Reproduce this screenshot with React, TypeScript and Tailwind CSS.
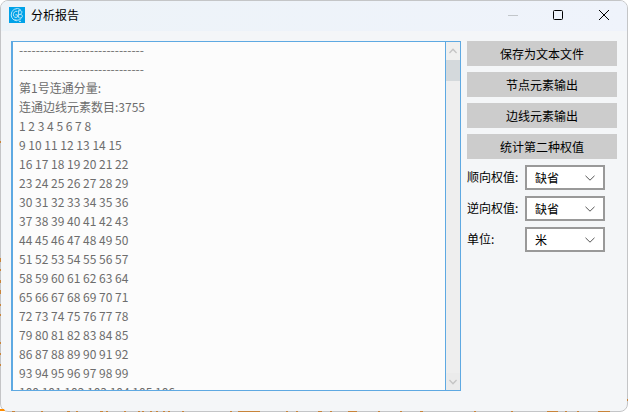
import { useLayoutEffect, useRef, useState } from "react";

const report = [
  "------------------------------",
  "------------------------------",
  "第1号连通分量:",
  "连通边线元素数目:3755",
  "1 2 3 4 5 6 7 8",
  "9 10 11 12 13 14 15",
  "16 17 18 19 20 21 22",
  "23 24 25 26 27 28 29",
  "30 31 32 33 34 35 36",
  "37 38 39 40 41 42 43",
  "44 45 46 47 48 49 50",
  "51 52 53 54 55 56 57",
  "58 59 60 61 62 63 64",
  "65 66 67 68 69 70 71",
  "72 73 74 75 76 77 78",
  "79 80 81 82 83 84 85",
  "86 87 88 89 90 91 92",
  "93 94 95 96 97 98 99",
  "100 101 102 103 104 105 106",
].join("\n");

const actions = ["保存为文本文件", "节点元素输出", "边线元素输出", "统计第二种权值"];

const settings = [
  { id: "forward", label: "顺向权值:", options: ["缺省"] },
  { id: "backward", label: "逆向权值:", options: ["缺省"] },
  { id: "unit", label: "单位:", options: ["米", "千米"] },
];

function AppIcon() {
  return (
    <svg className="size-4" viewBox="0 0 16 16" fill="none" aria-hidden="true">
      <rect width="16" height="16" fill="#00a2e8" />
      <g stroke="#b9e6f9" strokeWidth="1">
        <path d="M11.6 2.6A6 6 0 0 0 2.2 8c0 3 2.4 5.6 5.6 5.8" />
        <path d="M8.4 4.4C6 3.6 4.4 5.6 4.4 7.8s2.2 3.4 4 2.2V7.8H6.4" />
        <path d="M9.6 3.2v7.4c1.4 1 3.8.4 3.8-1.4s-1.8-2-3.6-1.6M9.6 4c2-1 3.8 0 3.2 1.8-.3 1-1.4 1.6-3 1.8" />
        <path d="M5.4 12.6c2 1 5 .8 6.8-1M10 14.4h2" />
      </g>
    </svg>
  );
}

function Chevron({ className = "" }: { className?: string }) {
  return (
    <svg className={className} width="10" height="6" viewBox="0 0 10 6" fill="none" stroke="currentColor" aria-hidden="true">
      <path d="M.5.8 5 5.2 9.5.8" />
    </svg>
  );
}

function ScrollArrow({ up = false }: { up?: boolean }) {
  return (
    <svg width="8" height="6" viewBox="0 0 8 6" fill="none" stroke="currentColor" strokeWidth="1.4" aria-hidden="true">
      <path d={up ? "M.4 5 4 1.2 7.6 5" : "M.4 1 4 4.8 7.6 1"} />
    </svg>
  );
}

function TitleBar() {
  return (
    <header className="flex h-[30px] items-center bg-linear-to-r from-[#edf3f8] to-[#eff3fb] pb-0.5 pl-2">
      <AppIcon />
      <h1 className="ml-1.5 grow text-[12px] leading-4 text-black">分析报告</h1>
      <button aria-label="最小化" className="flex h-full w-11 items-center justify-center text-[#c2c6ca]">
        <svg width="10" height="10" viewBox="0 0 10 10" stroke="currentColor"><path d="M0 5.5h10" /></svg>
      </button>
      <button aria-label="最大化" className="flex h-full w-[46px] items-center justify-center text-black">
        <svg width="10" height="10" viewBox="0 0 10 10" fill="none" stroke="currentColor"><rect x=".5" y=".5" width="9" height="9" rx="1" /></svg>
      </button>
      <button aria-label="关闭" className="flex h-full w-[46px] items-center justify-center text-black">
        <svg width="10" height="10" viewBox="0 0 10 10" stroke="currentColor"><path d="M0 0l10 10M10 0L0 10" /></svg>
      </button>
    </header>
  );
}

/* Edges of the drawing underneath, seen along the window's border: [start, length]. */
const bottomMarks = [
  [12, 3], [41, 2], [67, 3], [76, 2], [100, 3], [106, 2], [124, 2], [138, 2], [142, 2], [150, 2], [156, 2], [163, 2],
  [168, 2], [182, 2], [230, 2], [238, 22], [286, 2], [296, 2], [318, 4], [330, 2], [348, 9], [378, 2], [400, 2],
  [420, 3], [474, 2], [511, 2], [547, 11], [565, 2], [577, 2], [598, 12],
];
const leftMarks = [[141, 2], [258, 4], [269, 2], [280, 3], [290, 4], [304, 2], [314, 2], [342, 2], [353, 2], [364, 2]];

function CanvasMarks() {
  return (
    <svg className="pointer-events-none absolute inset-0 size-full" viewBox="0 0 628 412" fill="#c8843a" aria-hidden="true">
      {bottomMarks.map(([x, w]) => <rect key={x} x={x} y="411" width={w} height="1" />)}
      {leftMarks.map(([y, h]) => <rect key={y} x="0" y={y} width="1" height={h} />)}
      <rect x="627" y="399" width="1" height="2" />
      <path d="M0 409h4l1 2H0z" fill="#ff8c00" />
    </svg>
  );
}

export default function App() {
  const [text, setText] = useState(report);
  const box = useRef<HTMLTextAreaElement>(null);
  useLayoutEffect(() => {
    if (box.current) box.current.scrollTop = 2;
  }, []);
  return (
    <div className="relative flex h-screen font-['Noto_Sans_CJK_SC',sans-serif] text-[12px]">
      <div className="flex grow flex-col overflow-hidden rounded-lg border border-[#c4c5c7] bg-[#f4f6f8]">
        <TitleBar />
        <main className="flex min-h-0 grow gap-1.5 px-2.5 pt-2.5 pb-5">
          <div className="flex grow border border-l-2 border-[#5ea9e2] bg-[#fcfcfc]">
            <textarea
              ref={box}
              aria-label="分析报告内容"
              value={text}
              onChange={(e) => setText(e.target.value)}
              className="block min-w-0 grow resize-none overflow-hidden px-1.5 leading-[19px] text-[#6d6d6d] outline-none"
            />
            <div className="flex w-[15px] flex-col border-l border-[#5ea9e2] bg-[#eeeeee]">
              <button aria-label="向上滚动" className="flex h-[18px] items-center justify-center bg-[#f0f0ef] text-[#c4c4c4]">
                <ScrollArrow up />
              </button>
              <div className="h-[21px] bg-[#d4d9dc]" />
              <button aria-label="向下滚动" className="mt-auto flex h-[17px] items-center justify-center bg-[#ebebeb] text-[#c4c4c4]">
                <ScrollArrow />
              </button>
            </div>
          </div>
          <aside className="flex w-[150px] shrink-0 flex-col gap-1.5 text-black">
            {actions.map((name) => (
              <button key={name} className="h-[25px] bg-[#cccccc] leading-6">{name}</button>
            ))}
            {settings.map(({ id, label, options }) => (
              <div key={id} className="flex h-[25px]">
                <label htmlFor={id} className="w-[58px] leading-6">{label}</label>
                <div className="grid h-full w-20 items-center">
                  <select id={id} className="col-start-1 row-start-1 h-full appearance-none border-2 border-[#999999] bg-white px-2 leading-5 outline-none">
                    {options.map((o) => <option key={o}>{o}</option>)}
                  </select>
                  <Chevron className="pointer-events-none z-10 col-start-1 row-start-1 mr-2.5 justify-self-end text-[#555555]" />
                </div>
              </div>
            ))}
          </aside>
        </main>
      </div>
      <CanvasMarks />
    </div>
  );
}
